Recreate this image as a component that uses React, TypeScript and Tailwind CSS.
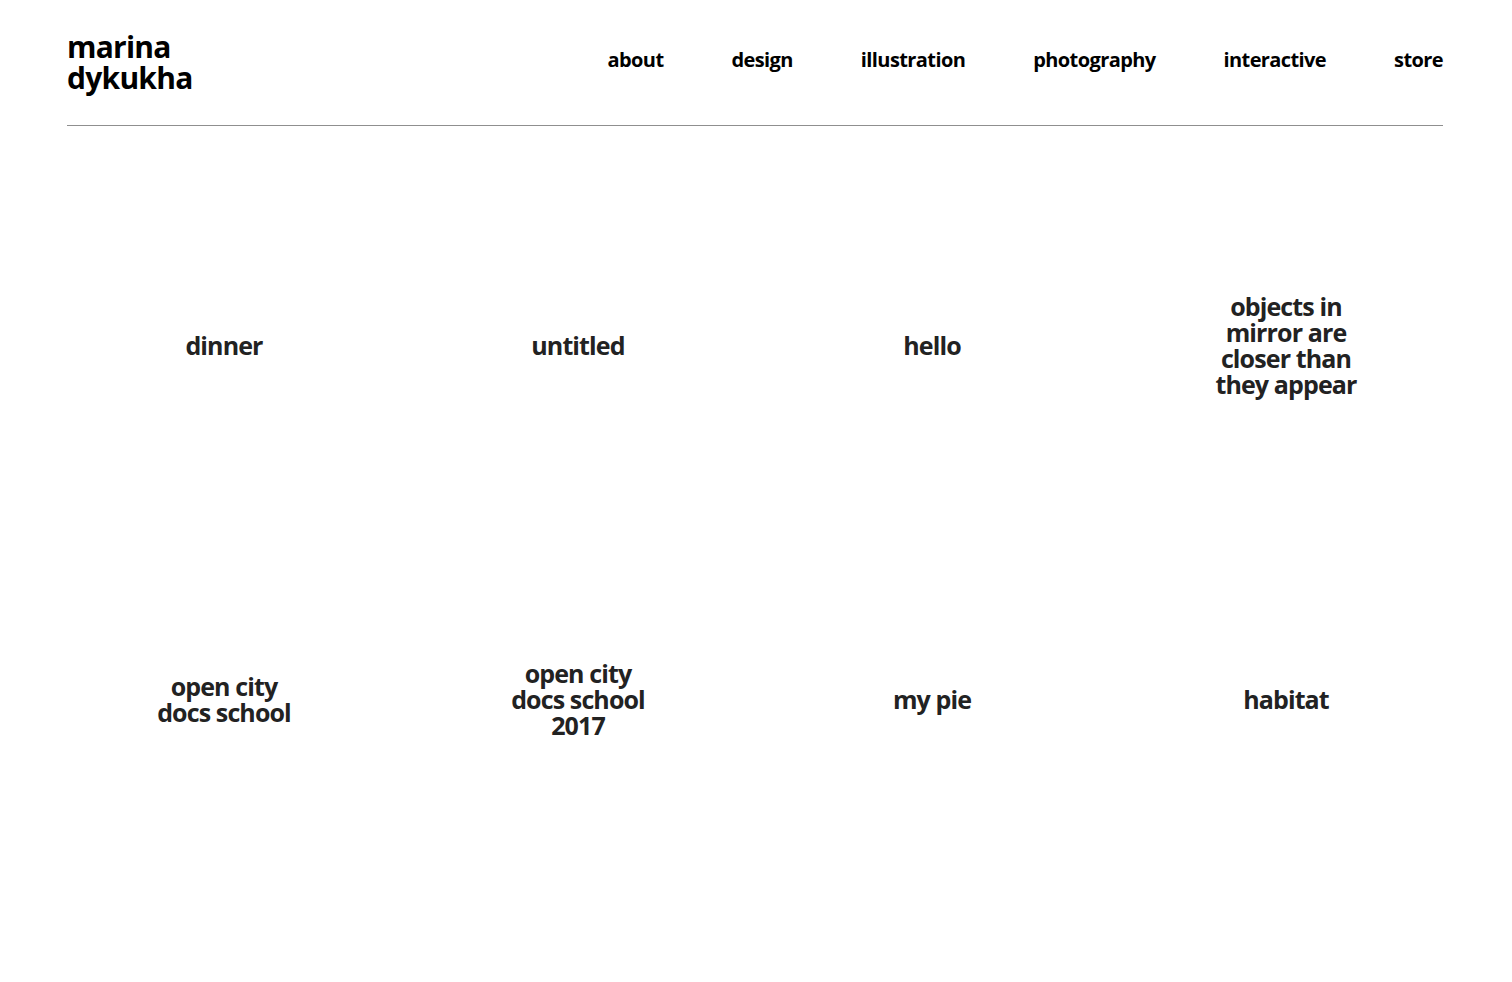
const nav = ['about', 'design', 'illustration', 'photography', 'interactive', 'store']

const works: string[][] = [
  ['dinner'],
  ['untitled'],
  ['hello'],
  ['objects in', 'mirror are', 'closer than', 'they appear'],
  ['open city', 'docs school'],
  ['open city', 'docs school', '2017'],
  ['my pie'],
  ['habitat'],
]

export default function App() {
  return (
    <div className="min-h-screen bg-white pl-[67px] pr-[69px] font-['Open_Sans',sans-serif]">
      <header className="flex items-start justify-between pt-[31px] pb-[32px] border-b border-[#8f8f8f]">
        <a href="#" className="text-[30px] leading-[31px] font-bold tracking-[-0.025em] text-black">
          marina
          <br />
          dykukha
        </a>
        <nav className="flex gap-[68px] pt-[15px]">
          {nav.map((item) => (
            <a key={item} href="#" className="text-[20px] leading-[28px] font-bold tracking-[-0.03em] text-black">
              {item}
            </a>
          ))}
        </nav>
      </header>

      <main className="grid grid-cols-4 gap-[40px] pt-[62px]">
        {works.map((lines, i) => (
          <a
            key={i}
            href="#"
            className="aspect-square flex flex-col items-center justify-center text-center text-[25px] leading-[26px] font-bold tracking-[-0.035em] text-[#222]"
          >
            {lines.map((l) => (
              <span key={l}>{l}</span>
            ))}
          </a>
        ))}
      </main>
    </div>
  )
}
